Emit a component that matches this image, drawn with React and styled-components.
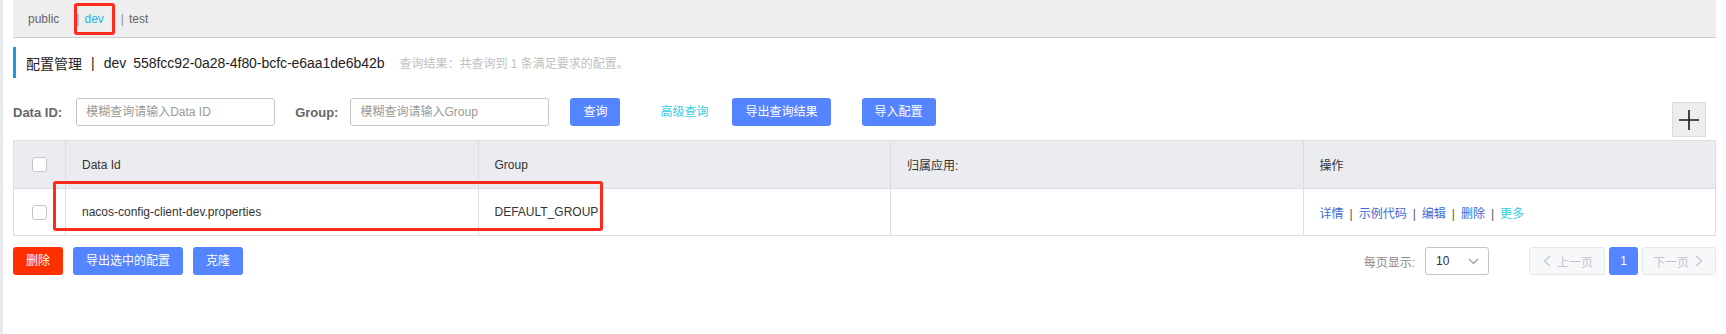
import React from 'react';
import styled, { createGlobalStyle } from 'styled-components';

const GlobalStyle = createGlobalStyle`
  html, body {
    margin: 0;
    padding: 0;
    background: #fff;
  }
  body {
    font-family: "Liberation Sans", "Noto Sans CJK SC", Arial, sans-serif;
    font-size: 12px;
    color: #333;
  }
  * {
    box-sizing: border-box;
  }
  input {
    font-family: inherit;
  }
`;

const Page = styled.div`
  display: flex;
  min-height: 100vh;
`;

const Edge = styled.div`
  width: 3px;
  flex-shrink: 0;
  background: #e8eaef;
`;

const Main = styled.div`
  flex: 1;
  min-width: 0;
  padding: 0 10px;
`;

const NsBar = styled.div`
  position: relative;
  height: 38px;
  display: flex;
  align-items: center;
  padding-left: 15px;
  background: #eeeeee;
  border-bottom: 1px solid #cccccc;
`;

const NsItem = styled.span`
  margin-right: 17px;
  color: ${(p) => (p.$active ? '#1fb6dc' : '#666')};
`;

const NsSep = styled.span`
  margin-right: 5px;
  color: #8a9099;
`;

const Mark = styled.div`
  position: absolute;
  border: 3px solid #fe2a1c;
  border-radius: 3px;
  pointer-events: none;
`;

const TitleBar = styled.div`
  margin-top: 9px;
  height: 31px;
  display: flex;
  align-items: center;
  padding-left: 10px;
  border-left: 3px solid #1a9ad6;
  font-size: 14px;
  color: #222;
`;

const TitleSep = styled.span`
  margin: 0 9px;
`;

const Hash = styled.span`
  margin-left: 7px;
  letter-spacing: -0.05px;
`;

const Hint = styled.span`
  margin-left: 15px;
  font-size: 12px;
  color: #c0c0c0;
`;

const Toolbar = styled.div`
  margin-top: 20px;
  display: flex;
  align-items: flex-start;
`;

const Field = styled.div`
  display: flex;
  align-items: center;
  height: 28px;
  margin-right: ${(p) => p.$gap}px;
`;

const Label = styled.label`
  margin-right: ${(p) => p.$space || 12}px;
  font-size: 13px;
  font-weight: bold;
  color: #666;
`;

const Input = styled.input`
  width: 199px;
  height: 28px;
  padding: 0 9px;
  border: 1px solid #c4c6cf;
  border-radius: 3px;
  font-size: 12px;
  color: #333;
  outline: none;
  &::placeholder {
    color: #9a9a9a;
  }
`;

const Button = styled.button`
  height: 28px;
  padding: 0 13px;
  margin-right: ${(p) => p.$gap || 0}px;
  border: none;
  border-radius: 3px;
  background: ${(p) => (p.$danger ? '#ff3000' : '#5584ff')};
  color: #fff;
  font-family: inherit;
  font-size: 12px;
  line-height: 28px;
  white-space: nowrap;
`;

const TextLink = styled.a`
  line-height: 28px;
  margin-right: ${(p) => p.$gap}px;
  color: #33cde5;
  font-size: 12px;
`;

const PlusBtn = styled.div`
  margin-left: auto;
  margin-top: 4px;
  margin-right: 10px;
  width: 34px;
  height: 35px;
  display: flex;
  align-items: center;
  justify-content: center;
  background: #ededed;
  border: 1px solid #dcdcdc;
`;

const TableWrap = styled.div`
  position: relative;
  margin-top: 3px;
`;

const Table = styled.table`
  width: 100%;
  table-layout: fixed;
  border-collapse: collapse;
  border: 1px solid #dcdee3;
`;

const Th = styled.th`
  height: 48px;
  padding: 0 16px;
  background: #ebecf0;
  border: 1px solid #dcdee3;
  text-align: ${(p) => (p.$center ? 'center' : 'left')};
  font-weight: normal;
  color: #333;
  font-size: 12px;
`;

const Td = styled.td`
  height: 47px;
  padding: 0 16px;
  border: 1px solid #dcdee3;
  text-align: ${(p) => (p.$center ? 'center' : 'left')};
  color: #333;
  font-size: 12px;
`;

const Check = styled.span`
  display: inline-block;
  vertical-align: middle;
  width: 15px;
  height: 15px;
  border: 1px solid #c4c6cf;
  border-radius: 3px;
  background: #fff;
`;

const ActLink = styled.a`
  color: ${(p) => (p.$more ? '#33cde5' : '#3c6bd6')};
`;

const ActSep = styled.span`
  margin: 0 6px;
  color: #555;
`;

const Footer = styled.div`
  margin-top: 11px;
  display: flex;
  align-items: center;
`;

const BtnGroup = styled.div`
  display: flex;
  gap: 10px;
`;

const Pager = styled.div`
  margin-left: auto;
  display: flex;
  align-items: center;
`;

const PageLabel = styled.span`
  margin-right: 10px;
  color: #888;
`;

const Select = styled.div`
  width: 64px;
  height: 28px;
  margin-right: 40px;
  padding: 0 9px 0 10px;
  display: flex;
  align-items: center;
  justify-content: space-between;
  border: 1px solid #c4c6cf;
  border-radius: 3px;
  color: #333;
  font-size: 12px;
`;

const PageBtn = styled.div`
  height: 28px;
  display: flex;
  align-items: center;
  gap: 6px;
  padding: ${(p) => (p.$next ? '0 12px 0 10px' : '0 11px 0 13px')};
  border: 1px solid #e6e7eb;
  border-radius: 3px;
  background: #f7f8fa;
  color: #c4c6cf;
`;

const CurrentPage = styled.div`
  width: 29px;
  height: 28px;
  margin: 0 4px;
  display: flex;
  align-items: center;
  justify-content: center;
  border-radius: 3px;
  background: #5584ff;
  color: #fff;
`;

const Chevron = ({ dir }) => (
  <svg width="8" height="12" viewBox="0 0 8 12">
    <polyline
      points={dir === 'left' ? '7,1 1.5,6 7,11' : '1,1 6.5,6 1,11'}
      fill="none"
      stroke="#c4c6cf"
      strokeWidth="1.3"
    />
  </svg>
);

const namespaces = [
  { name: 'public' },
  { name: 'dev', active: true },
  { name: 'test' },
];

const App = () => {
  return (
    <Page>
      <GlobalStyle />
      <Edge />
      <Main>
        <NsBar>
          {namespaces.map((ns, i) => (
            <React.Fragment key={ns.name}>
              {i > 0 && <NsSep>|</NsSep>}
              <NsItem $active={ns.active}>{ns.name}</NsItem>
            </React.Fragment>
          ))}
          <Mark style={{ left: 61, top: 3, width: 41, height: 32 }} />
        </NsBar>

        <TitleBar>
          <span>配置管理</span>
          <TitleSep>|</TitleSep>
          <span>dev</span>
          <Hash>558fcc92-0a28-4f80-bcfc-e6aa1de6b42b</Hash>
          <Hint>查询结果：共查询到 1 条满足要求的配置。</Hint>
        </TitleBar>

        <Toolbar>
          <Field $gap={20}>
            <Label $space={14}>Data ID:</Label>
            <Input placeholder="模糊查询请输入Data ID" />
          </Field>
          <Field $gap={21}>
            <Label>Group:</Label>
            <Input placeholder="模糊查询请输入Group" />
          </Field>
          <Button $gap={40}>查询</Button>
          <TextLink $gap={24}>高级查询</TextLink>
          <Button $gap={31}>导出查询结果</Button>
          <Button>导入配置</Button>
          <PlusBtn>
            <svg width="22" height="22" viewBox="0 0 22 22">
              <path d="M1 11h20M11 1v20" stroke="#1a1a1a" strokeWidth="1.6" />
            </svg>
          </PlusBtn>
        </Toolbar>

        <TableWrap>
          <Table>
            <colgroup>
              <col style={{ width: 52 }} />
              <col />
              <col />
              <col />
              <col />
            </colgroup>
            <thead>
              <tr>
                <Th $center>
                  <Check />
                </Th>
                <Th>Data Id</Th>
                <Th>Group</Th>
                <Th>归属应用:</Th>
                <Th>操作</Th>
              </tr>
            </thead>
            <tbody>
              <tr>
                <Td $center>
                  <Check />
                </Td>
                <Td>nacos-config-client-dev.properties</Td>
                <Td>DEFAULT_GROUP</Td>
                <Td />
                <Td>
                  <ActLink>详情</ActLink>
                  <ActSep>|</ActSep>
                  <ActLink>示例代码</ActLink>
                  <ActSep>|</ActSep>
                  <ActLink>编辑</ActLink>
                  <ActSep>|</ActSep>
                  <ActLink>删除</ActLink>
                  <ActSep>|</ActSep>
                  <ActLink $more>更多</ActLink>
                </Td>
              </tr>
            </tbody>
          </Table>
          <Mark style={{ left: 40, top: 41, width: 550, height: 50 }} />
        </TableWrap>

        <Footer>
          <BtnGroup>
            <Button $danger>删除</Button>
            <Button>导出选中的配置</Button>
            <Button>克隆</Button>
          </BtnGroup>
          <Pager>
            <PageLabel>每页显示:</PageLabel>
            <Select>
              <span>10</span>
              <svg width="11" height="7" viewBox="0 0 11 7">
                <polyline points="1,1 5.5,5.5 10,1" fill="none" stroke="#999" strokeWidth="1.2" />
              </svg>
            </Select>
            <PageBtn>
              <Chevron dir="left" />
              <span>上一页</span>
            </PageBtn>
            <CurrentPage>1</CurrentPage>
            <PageBtn $next>
              <span>下一页</span>
              <Chevron dir="right" />
            </PageBtn>
          </Pager>
        </Footer>
      </Main>
    </Page>
  );
};

export default App;
